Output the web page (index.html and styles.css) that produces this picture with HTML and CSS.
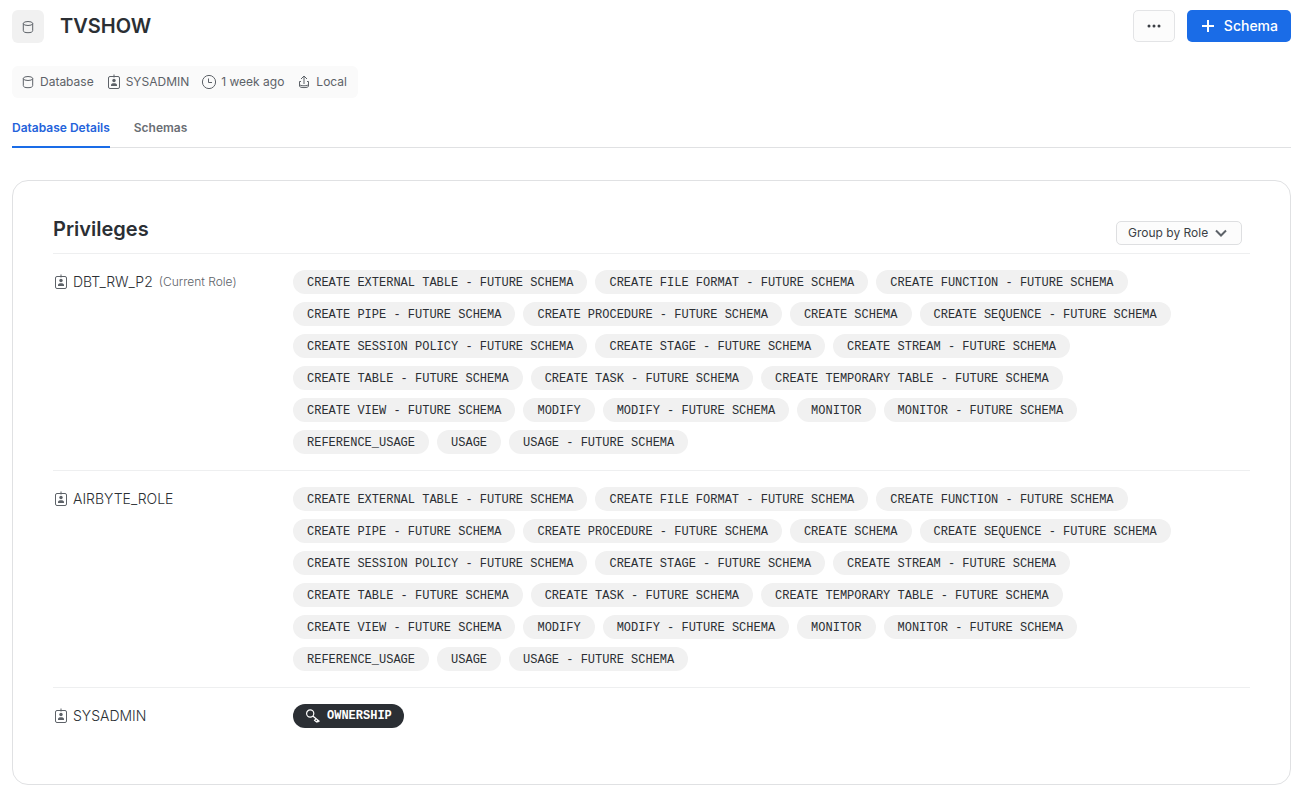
FILE: index.html
```html
<!DOCTYPE html>
<html lang="en">
<head>
<meta charset="utf-8">
<meta name="viewport" content="width=device-width, initial-scale=1">
<title>TVSHOW</title>
<link rel="stylesheet" href="styles.css">
</head>
<body>
<svg class="sprite" aria-hidden="true">
  <symbol id="database" viewBox="0 0 16 16"><g fill="none" stroke="currentColor"><ellipse cx="8" cy="4.500" rx="4.700" ry="2"/><path d="M3.300 4.500v7c0 1.500 1.700 2.200 4.700 2.200s4.700-.7 4.700-2.200v-7"/></g></symbol>
  <symbol id="role" viewBox="0 0 16 16"><rect x="2.500" y="2.500" width="11" height="12" rx="1.500" fill="none" stroke="currentColor"/><path d="M8 .5v3" stroke="currentColor"/><circle cx="8" cy="6.500" r="1.700" fill="currentColor"/><path d="M5 12v-.8c0-1.400 1.200-2 3-2s3 .6 3 2v.8z" fill="currentColor"/></symbol>
  <symbol id="clock" viewBox="0 0 16 16"><g fill="none" stroke="currentColor"><circle cx="8" cy="8" r="6.600"/><path d="M7.500 4.500v4H11"/></g></symbol>
  <symbol id="local" viewBox="0 0 16 16"><g fill="none" stroke="currentColor"><path d="M8 10V2M5 5l3-3 3 3M5 7.500H3.500v2.700c0 1 1.500 1.600 4.500 1.600s4.500-.6 4.500-1.600V7.500H11M3.500 10v2c0 1 1.500 1.600 4.500 1.600s4.500-.6 4.500-1.600v-2"/></g></symbol>
  <symbol id="key" viewBox="0 0 16 16"><g fill="none" stroke="currentColor" stroke-width="1.200"><circle cx="5.200" cy="5.500" r="3.600"/><path d="M7.800 8l6.700 5.500M11 10.700l-1.400 1.700 1.900 1.500 1.300-1.600M13.600 12.800l-1.100 1.500"/></g></symbol>
</svg>
<main class="page">
  <header class="page-header">
    <span class="object-icon"><svg class="icon"><use href="#database"/></svg></span>
    <h1 class="page-title">TVSHOW</h1>
    <button class="button button-more" type="button" aria-label="More actions"><svg class="icon" viewBox="0 0 16 16" fill="currentColor"><circle cx="3" cy="8" r="1.500"/><circle cx="8" cy="8" r="1.500"/><circle cx="13" cy="8" r="1.500"/></svg></button>
    <button class="button button-primary" type="button"><svg class="icon" viewBox="0 0 16 16" fill="none" stroke="currentColor" stroke-width="2"><path d="M8 2v12M2 8h12"/></svg>Schema</button>
  </header>
  <ul class="meta">
    <li class="meta-item"><svg class="icon"><use href="#database"/></svg>Database</li>
    <li class="meta-item"><svg class="icon"><use href="#role"/></svg>SYSADMIN</li>
    <li class="meta-item"><svg class="icon"><use href="#clock"/></svg>1 week ago</li>
    <li class="meta-item"><svg class="icon"><use href="#local"/></svg>Local</li>
  </ul>
  <nav class="tabs">
    <a class="tab tab-active" href="#details" aria-current="page">Database Details</a>
    <a class="tab" href="#schemas">Schemas</a>
  </nav>
  <section class="card" id="details">
    <div class="card-header">
      <h2 class="card-title">Privileges</h2>
      <div class="group-by">
        <select class="group-select" aria-label="Group privileges"><option>Group by Role</option></select>
        <svg class="chevron" viewBox="0 0 12 12" fill="none" stroke="currentColor" stroke-width="2"><path d="M1 3.500l5 5 5-5"/></svg>
      </div>
    </div>
    <div class="role-row">
      <h3 class="role"><svg class="icon"><use href="#role"/></svg>DBT_RW_P2<span class="role-note">(Current Role)</span></h3>
      <ul class="privileges">
        <li class="pill">CREATE EXTERNAL TABLE - FUTURE SCHEMA</li>
        <li class="pill">CREATE FILE FORMAT - FUTURE SCHEMA</li>
        <li class="pill">CREATE FUNCTION - FUTURE SCHEMA</li>
        <li class="pill">CREATE PIPE - FUTURE SCHEMA</li>
        <li class="pill">CREATE PROCEDURE - FUTURE SCHEMA</li>
        <li class="pill">CREATE SCHEMA</li>
        <li class="pill">CREATE SEQUENCE - FUTURE SCHEMA</li>
        <li class="pill">CREATE SESSION POLICY - FUTURE SCHEMA</li>
        <li class="pill">CREATE STAGE - FUTURE SCHEMA</li>
        <li class="pill">CREATE STREAM - FUTURE SCHEMA</li>
        <li class="pill">CREATE TABLE - FUTURE SCHEMA</li>
        <li class="pill">CREATE TASK - FUTURE SCHEMA</li>
        <li class="pill">CREATE TEMPORARY TABLE - FUTURE SCHEMA</li>
        <li class="pill">CREATE VIEW - FUTURE SCHEMA</li>
        <li class="pill">MODIFY</li>
        <li class="pill">MODIFY - FUTURE SCHEMA</li>
        <li class="pill">MONITOR</li>
        <li class="pill">MONITOR - FUTURE SCHEMA</li>
        <li class="pill">REFERENCE_USAGE</li>
        <li class="pill">USAGE</li>
        <li class="pill">USAGE - FUTURE SCHEMA</li>
      </ul>
    </div>
    <div class="role-row">
      <h3 class="role"><svg class="icon"><use href="#role"/></svg>AIRBYTE_ROLE</h3>
      <ul class="privileges">
        <li class="pill">CREATE EXTERNAL TABLE - FUTURE SCHEMA</li>
        <li class="pill">CREATE FILE FORMAT - FUTURE SCHEMA</li>
        <li class="pill">CREATE FUNCTION - FUTURE SCHEMA</li>
        <li class="pill">CREATE PIPE - FUTURE SCHEMA</li>
        <li class="pill">CREATE PROCEDURE - FUTURE SCHEMA</li>
        <li class="pill">CREATE SCHEMA</li>
        <li class="pill">CREATE SEQUENCE - FUTURE SCHEMA</li>
        <li class="pill">CREATE SESSION POLICY - FUTURE SCHEMA</li>
        <li class="pill">CREATE STAGE - FUTURE SCHEMA</li>
        <li class="pill">CREATE STREAM - FUTURE SCHEMA</li>
        <li class="pill">CREATE TABLE - FUTURE SCHEMA</li>
        <li class="pill">CREATE TASK - FUTURE SCHEMA</li>
        <li class="pill">CREATE TEMPORARY TABLE - FUTURE SCHEMA</li>
        <li class="pill">CREATE VIEW - FUTURE SCHEMA</li>
        <li class="pill">MODIFY</li>
        <li class="pill">MODIFY - FUTURE SCHEMA</li>
        <li class="pill">MONITOR</li>
        <li class="pill">MONITOR - FUTURE SCHEMA</li>
        <li class="pill">REFERENCE_USAGE</li>
        <li class="pill">USAGE</li>
        <li class="pill">USAGE - FUTURE SCHEMA</li>
      </ul>
    </div>
    <div class="role-row">
      <h3 class="role"><svg class="icon"><use href="#role"/></svg>SYSADMIN</h3>
      <ul class="privileges">
        <li class="pill pill-owner"><svg class="icon"><use href="#key"/></svg>OWNERSHIP</li>
      </ul>
    </div>
  </section>
</main>
</body>
</html>
```
FILE: styles.css
```css
* { box-sizing: border-box; }

body {
  margin: 0;
  background: #fff;
  color: #2b2f34;
  font-family: Inter, "Liberation Sans", sans-serif;
  font-size: 12px;
  line-height: 16px;
}

h1, h2, h3, ul { margin: 0; padding: 0; }
ul { list-style: none; }

.sprite { position: absolute; width: 0; height: 0; }
.icon { display: block; flex: none; width: 16px; height: 16px; }

.page { padding: 10px 21px 6px 12px; }

.page-header { display: flex; align-items: flex-start; gap: 12px; }

.object-icon {
  display: grid;
  place-items: center;
  width: 32px;
  height: 33px;
  border-radius: 6px;
  background: #f1f1f1;
  color: #5d6268;
}

.page-title {
  flex: 1;
  padding-left: 4px;
  font-size: 20px;
  font-weight: 600;
  line-height: 32px;
}

.button {
  display: flex;
  align-items: center;
  justify-content: center;
  height: 32px;
  border: 0;
  border-radius: 5px;
  font: 500 14px/16px Inter, "Liberation Sans", sans-serif;
  cursor: pointer;
}

.button-more {
  width: 42px;
  border: 1px solid #e3e4e6;
  background: #fcfcfc;
  color: #3b3f45;
}

.button-primary {
  gap: 8px;
  padding: 0 13px;
  background: #1a6ce7;
  color: #fff;
}

.meta {
  display: flex;
  gap: 12px;
  width: fit-content;
  margin-top: 23px;
  padding: 8px 11px 8px 8px;
  border-radius: 6px;
  background: #fafafa;
  color: #5d6268;
}

.meta-item { display: flex; gap: 4px; }

.tabs {
  display: flex;
  gap: 24px;
  margin-top: 22px;
  border-bottom: 1px solid #e0e1e3;
}

.tab {
  margin-bottom: -1px;
  padding-bottom: 10px;
  border-bottom: 2px solid transparent;
  color: #6a6e74;
  font-weight: 600;
  text-decoration: none;
}

.tab-active { border-color: #1a6ce7; color: #2463db; }

.card {
  margin-top: 32px;
  padding: 36px 40px 40px;
  border: 1px solid #e0e1e3;
  border-radius: 16px;
}

.card-header {
  display: flex;
  align-items: flex-end;
  justify-content: space-between;
  padding: 0 8px 8px 0;
}

.card-title {
  align-self: flex-start;
  padding-bottom: 4px;
  font-size: 20px;
  font-weight: 600;
  line-height: 24px;
}

.group-by { position: relative; }

.group-select {
  display: block;
  width: 126px;
  height: 24px;
  padding: 0 28px 0 11px;
  border: 1px solid #dedfe1;
  border-radius: 5px;
  background: #fcfcfc;
  color: #3b3f45;
  font: 400 12px/16px Inter, "Liberation Sans", sans-serif;
  appearance: none;
}

.chevron {
  position: absolute;
  top: 6px;
  right: 15px;
  width: 12px;
  height: 12px;
  color: #5d6268;
  pointer-events: none;
}

.role-row {
  display: grid;
  grid-template-columns: 240px 1fr;
  padding: 16px 0;
  border-top: 1px solid #eeeff0;
}

.role {
  display: flex;
  align-items: center;
  gap: 4px;
  height: 24px;
  font-size: 14px;
  font-weight: 300;
}

.role .icon { color: #5d6268; }
.role-note { padding-left: 2px; color: #5d6268; font-size: 12px; }

.privileges {
  display: flex;
  flex-wrap: wrap;
  gap: 8px;
  padding-right: 60px;
}

.pill {
  display: flex;
  align-items: center;
  gap: 6px;
  height: 24px;
  padding: 2px 14px 0;
  border-radius: 12px;
  background: #f1f1f1;
  font-family: "Liberation Mono", monospace;
  white-space: nowrap;
}

.pill-owner {
  padding: 0 12px;
  background: #2b2f34;
  color: #fff;
  font-weight: 700;
}
```
